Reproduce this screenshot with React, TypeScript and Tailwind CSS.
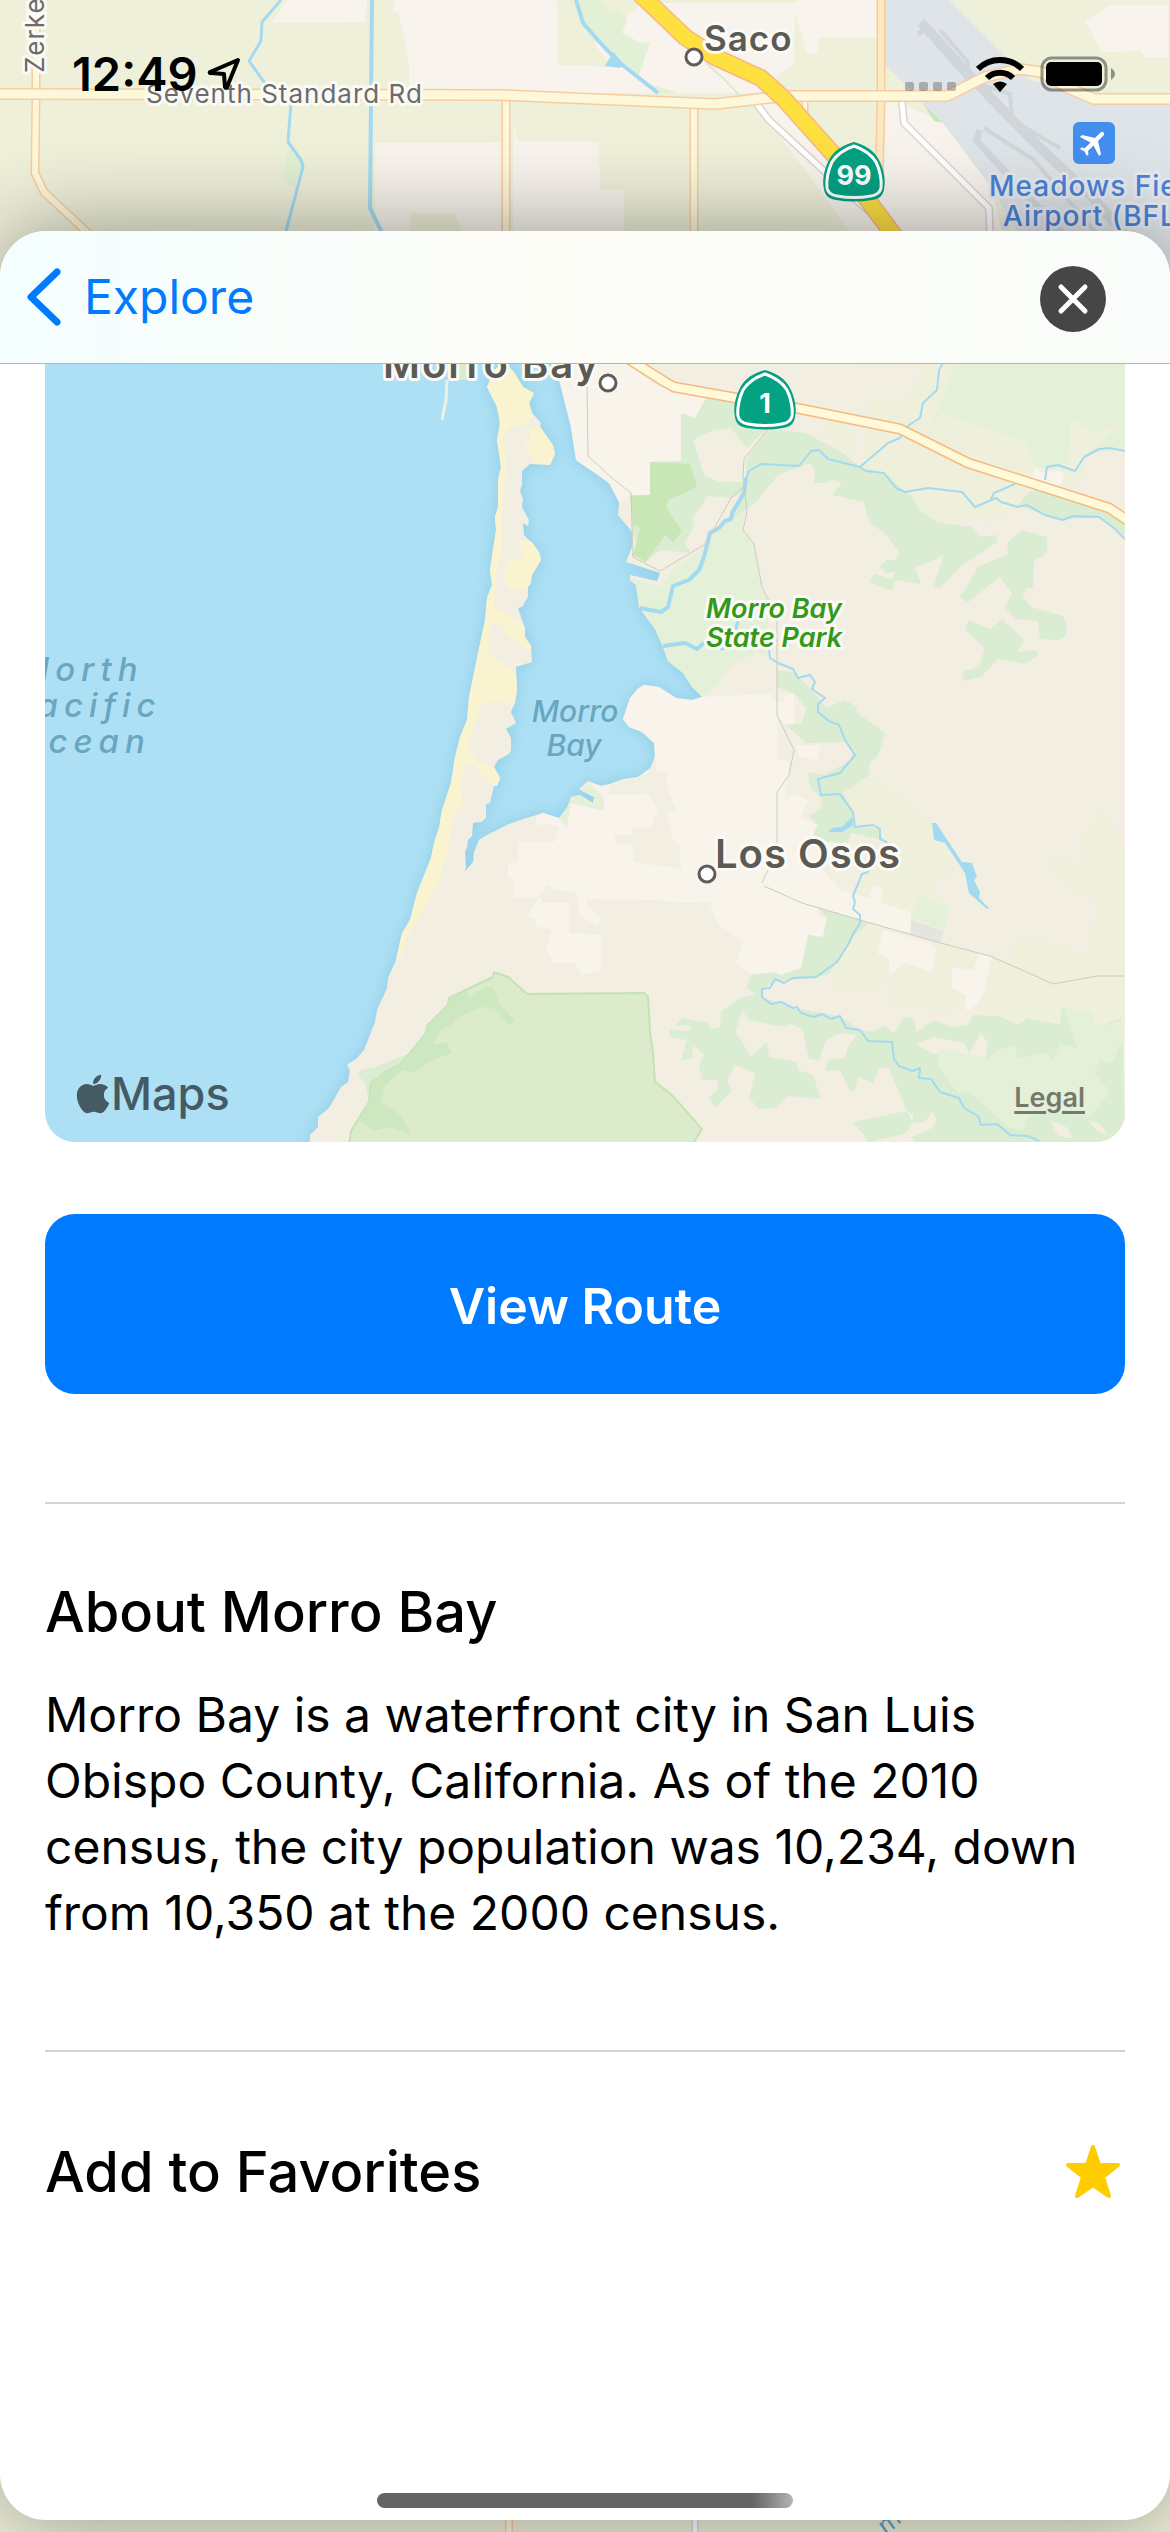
import React from 'react';
import { FaApple } from 'react-icons/fa';
import { MdFlight } from 'react-icons/md';

const HALO = {
  stroke: '#fbfaf5',
  strokeWidth: 6,
  strokeLinejoin: 'round',
  paintOrder: 'stroke',
} as const;

const Road: React.FC<{ points: string; width?: number; fill?: string; edge?: string }> = ({
  points,
  width = 7,
  fill = '#fdf8da',
  edge = '#f7cda0',
}) => (
  <g fill="none" strokeLinejoin="round">
    <polyline points={points} stroke={edge} strokeWidth={width + 3} />
    <polyline points={points} stroke={fill} strokeWidth={width} />
  </g>
);

const River: React.FC<{ points: string; width?: number }> = ({ points, width = 2 }) => (
  <polyline points={points} fill="none" stroke="#a3daf1" strokeWidth={width} strokeLinejoin="round" />
);

const Shield: React.FC<{ x: number; y: number; label: string }> = ({ x, y, label }) => (
  <g transform={`translate(${x} ${y})`}>
    <path
      d="M0 -30C11 -27 20 -22 25 -12C30 -3 32 9 30 17C29 24 25 27 18 28C6 30 -6 30 -18 28C-25 27 -29 24 -30 17C-32 9 -30 -3 -25 -12C-20 -22 -11 -27 0 -30Z"
      fill="#04a183"
    />
    <path
      d="M0 -26C9 -23 17 -18 22 -10C26 -2 28 9 27 16C26 21 23 23 17 24C6 26 -6 26 -17 24C-23 23 -26 21 -27 16C-28 9 -26 -2 -22 -10C-17 -18 -9 -23 0 -26Z"
      fill="none"
      stroke="#fff"
      strokeWidth="3"
    />
    <text y="13" textAnchor="middle" fontSize="27" fontWeight="700" fill="#fff">
      {label}
    </text>
  </g>
);

const TownDot: React.FC<{ x: number; y: number }> = ({ x, y }) => (
  <circle cx={x} cy={y} r="8" fill="#fff" stroke="#5f5d59" strokeWidth="3" />
);

const BackgroundMap = () => (
  <svg
    className="absolute inset-x-0 top-0 h-75 w-full"
    viewBox="0 0 1170 300"
    preserveAspectRatio="xMinYMin slice"
    aria-hidden="true"
  >
    <rect width="1170" height="300" fill="#eef0da" />
    <g fill="#f8f3ec">
      <polygon points="287,0 272,23 365,22 367,0" />
      <polygon points="394,0 393,10 399,13 409,63 409,91 600,93 600,66 558,65 557,0" />
      <polygon points="375,143 501,142 501,231 375,231" />
      <polygon points="513,123 519,142 599,142 600,190 624,190 624,231 513,231" />
      <polygon points="570,66 612,67 595,45 640,5 664,3 792,3 800,0 878,0 878,38 819,38 817,53 807,54 795,13 794,65 777,75 773,93 570,93" />
      <polygon points="880,103 901,103 943,123 991,187 1002,231 880,231" />
      <polygon points="756,104 782,104 840,160 878,190 878,231 850,231" />
      <polygon points="1085,22 1110,5 1168,5 1168,57 1145,57 1140,51 1102,52" />
    </g>
    <g fill="#eef0da">
      <polygon points="410,213 455,213 462,231 410,231" />
      <polygon points="808,108 878,108 878,122 860,122 854,108 820,130" />
    </g>
    <g fill="#e2f0d5">
      <polygon points="578,0 600,0 608,13 620,10 627,20 622,33 639,42 650,43 637,80 677,93 660,93 620,60 585,27" />
      <polygon points="288,148 301,160 303,167 296,190 283,180" />
      <polygon points="922,102 943,123 934,121" fill="#c4e8b8" />
    </g>
    <polygon points="885,0 949,0 1006,57 1030,80 1062,87 1094,102 1170,102 1170,300 1060,300 991,187 943,123 922,102 909,88 885,65" fill="#dfe4e8" />
    <g fill="none" stroke="#d0d6da">
      <polyline points="921,22 960,66 1030,138 1090,195 1150,262" strokeWidth="10" />
      <polyline points="918,34 928,27 1005,110 1075,180 1130,240" strokeWidth="5" />
      <polyline points="940,30 968,62 966,80 1010,94 1012,120 1060,148" strokeWidth="4" />
      <polyline points="980,130 976,140 1068,240" strokeWidth="7" />
      <polyline points="984,128 1034,160 1110,250" strokeWidth="4" />
    </g>

    <River points="281,0 262,22 261,41 249,61 264,82 291,103 288,142 301,160 303,167 286,231" width={3} />
    <River points="372,0 371,100 370,208 383,235" width={4} />
    <River points="576,0 583,23 604,47 620,63 658,93" width={4} />
    <polygon points="613,52 623,63 620,68 605,66" fill="#a3daf1" />
    <polyline points="705,62 725,80 742,98" fill="none" stroke="#dcebcc" strokeWidth="2" />

    <Road points="756,103 769,120 823,170 895,235" width={5} fill="#fff" edge="#dbd7d0" />
    <Road points="902,102 904,123 989,208 990,235" width={5} fill="#fff" edge="#dbd7d0" />
    <Road points="36,-4 36,94 35,173 44,192 90,235" width={6} />
    <Road points="506,97 506,235" width={6} />
    <Road points="694,105 694,235" width={6} />
    <Road points="881,-4 881,97 879,190" width={6} fill="#fce9c0" />
    <Road points="805,97 805,125" width={4} />
    <Road points="0,94 500,95 570,98 715,104 742,101 784,96 947,96 985,77 1020,69 1041,72 1068,88 1094,99 1170,99" width={9} />
    <Road points="640,-6 685,37 715,57 761,78 784,99 834,155 905,250" width={15} fill="#ffe041" edge="#f5b885" />

    <Shield x={854} y={172} label="99" />
    <TownDot x={694} y={57} />
    <g {...HALO} fill="#6b6b6b" fontSize="26">
      <text transform="translate(44 73) rotate(-90)" letterSpacing="1">
        Zerker Rd
      </text>
      <text x="146" y="103" letterSpacing="1">
        Seventh Standard Rd
      </text>
      <text x="704" y="51" fontSize="35" fontWeight="600" letterSpacing="1" fill="#5c5a55">
        Saco
      </text>
      <g fill="#4b82d6" stroke="#e6ebf0" fontSize="28" fontWeight="500" letterSpacing="1">
        <text x="989" y="196">
          Meadows Field
        </text>
        <text x="1003" y="226">
          Airport (BFL)
        </text>
      </g>
    </g>
    <rect x="1073" y="122" width="42" height="42" rx="6" fill="#438ff0" />
    <g transform="translate(1094 143) rotate(45)">
      <MdFlight x="-17" y="-17" size={34} color="#fff" />
    </g>
  </svg>
);

const BottomMap = () => (
  <svg
    className="absolute inset-x-0 bottom-0 h-15 w-full"
    viewBox="0 0 1170 60"
    preserveAspectRatio="xMinYMax slice"
    aria-hidden="true"
  >
    <Road points="509,0 509,60" width={5} />
    <Road points="695,0 695,60" width={4} fill="#fff" edge="#d8d8dc" />
    <text transform="translate(887 64) rotate(-45)" fontSize="26" fontStyle="italic" fill="#5aa5cc">
      m
    </text>
  </svg>
);

const StatusBar = () => (
  <div className="relative flex items-start justify-between pt-12 pr-13.5 pl-18">
    <div className="flex items-center gap-2">
      <span className="text-[47px] leading-13 font-semibold text-black">12:49</span>
      <svg className="h-9 w-9" viewBox="0 0 36 36" aria-hidden="true">
        <path
          d="M32 4L4 16Q3 17 5 17L18 18L19 31Q20 33 21 31Z"
          fill="none"
          stroke="#000"
          strokeWidth="4"
          strokeLinejoin="round"
        />
      </svg>
    </div>
    <div className="flex items-start gap-4 pt-2">
      <div className="flex gap-1.25 pt-6.5 pr-1">
        {[0, 1, 2, 3].map((dot) => (
          <span key={dot} className="h-2.25 w-2.25 rounded-xs bg-black/25" />
        ))}
      </div>
      <svg className="h-9 w-12" viewBox="0 0 48 36" aria-label="Wi-Fi">
        <path d="M2 13C14 1 34 1 46 13" fill="none" stroke="#000" strokeWidth="6" />
        <path d="M11 22C18 15 30 15 37 22" fill="none" stroke="#000" strokeWidth="6" />
        <path d="M17 28Q24 23 31 28L24 36Z" fill="#000" />
      </svg>
      <svg className="h-9 w-19" viewBox="0 0 76 36" aria-label="Battery">
        <rect x="2" y="2" width="64" height="32" rx="10" fill="none" stroke="#000" strokeOpacity=".4" strokeWidth="3" />
        <rect x="6" y="6" width="56" height="24" rx="5" fill="#000" />
        <path d="M71 12Q79 18 71 24Z" fill="#000" fillOpacity=".4" />
      </svg>
    </div>
  </div>
);

const COAST =
  '551,363 555,370 560,383 571,427 576,460 580,463 595,473 609,483 619,502 618,515 632,532 632,547 626,562 660,573 657,581 630,575 630,580 636,585 639,607 646,617 655,629 663,647 668,661 683,673 692,687 702,692 702,697 692,700 676,698 659,687 644,685 638,688 630,698 623,719 629,727 642,732 654,743 655,755 653,766 648,773 638,777 623,779 610,784 601,786 588,781 579,789 594,797 593,803 580,795 571,797 567,808 559,818 543,813 523,819 509,824 485,836 479,840 474,852 473,862 465,871 466,867 465,851 467,848 468,840 472,836 473,823 481,822 486,818 486,804 490,803 494,786 497,786 500,778 494,767 498,760 509,754 511,750 511,738 506,729 516,723 511,712 515,703 517,690 516,667 532,662 531,646 525,637 525,628 518,608 522,607 528,597 528,587 531,583 532,575 541,560 539,552 531,542 524,535 523,523 528,526 529,520 522,507 523,499 520,491 522,485 522,471 530,464 550,465 555,454 553,445 540,427 541,423 532,413 529,403 534,393 523,387 514,372 505,363 494,370 487,387 497,407 500,423 497,440 501,467 498,480 498,507 495,517 496,530 490,570 492,585 487,598 485,620 475,668 469,697 467,720 460,737 455,757 451,783 442,810 439,828 434,843 431,858 417,893 410,920 402,933 396,960 388,978 387,988 377,1010 375,1022 364,1050 357,1058 347,1065 350,1070 348,1082 341,1087 329,1108 318,1117 318,1127 310,1135 309,1150 1140,1150 1140,350 551,350';

const PreviewMap = () => (
  <svg className="block h-auto w-full" viewBox="45 364 1080 778" role="img" aria-label="Map of Morro Bay">
    <rect x="45" y="350" width="1080" height="800" fill="#ade0f5" />
    <polyline points="447,380 446,400 442,420" fill="none" stroke="#eef0e6" strokeWidth="3" />
    <polygon points="457,363 470,363 466,380 457,380" fill="#dcebcc" />
    <polygon points={COAST} fill="#f2eee1" className="drop-shadow-[0_0_8px_#8fcde6]" />

    {/* beach */}
    <g fill="#faf3cf">
      <polygon points="505,363 494,370 487,387 497,407 500,423 497,440 501,467 498,480 498,507 495,517 496,530 490,570 492,585 487,598 485,620 475,668 469,697 467,720 460,737 455,757 451,783 442,810 439,828 434,843 431,858 417,893 410,920 402,933 396,960 401,958 407,937 417,922 433,892 439,885 441,873 447,853 452,823 457,811 464,802 460,788 464,766 472,763 494,786 497,786 500,778 494,767 480,762 469,752 469,745 481,704 503,701 511,707 515,703 517,690 516,673 488,653 489,633 492,624 501,625 507,635 531,652 531,646 525,637 525,628 520,622 494,607 497,567 503,547 501,517 504,483 507,467 503,437 510,428 528,424 533,415 532,413 529,403 534,393 523,387 514,372" />
      <polygon points="539,425 529,430 531,438 525,444 534,463 550,465 555,454 553,445 541,428" />
      <polygon points="519,539 531,541 539,552 541,560 532,575 530,584 523,590 509,589 504,580 505,567 510,560 523,558" />
    </g>

    {/* towns */}
    <g fill="#f8f4ec">
      <polygon points="551,363 560,383 571,427 576,460 595,473 609,483 619,502 631,495 650,495 650,462 681,461 681,413 695,418 706,398 657,386 625,363" />
      <polygon points="702,697 770,694 777,702 784,703 785,695 794,695 794,724 786,724 777,717 777,760 789,761 789,775 785,790 785,800 794,794 808,800 800,817 817,825 813,835 851,843 843,857 821,867 840,890 868,898 873,885 884,888 880,903 911,912 910,933 860,920 818,908 818,918 827,918 823,937 808,935 801,968 781,975 749,973 736,963 744,941 719,925 709,902 687,903 655,900 586,899 588,907 601,917 597,926 580,915 576,892 555,890 547,885 538,897 513,898 514,882 508,875 508,863 518,863 518,842 554,842 559,827 543,823 537,827 536,816 543,813 559,818 571,803 587,806 604,811 604,798 589,782 601,786 610,784 638,777 653,766 655,755 654,743 642,732 629,727 623,719 630,698 644,685 659,687 676,698 692,700" />
      <polygon points="539,898 544,903 569,903 569,933 601,935 601,971 582,975 575,963 553,963 546,948 552,930 534,926 537,919 527,917" />
      <polygon points="796,745 821,745 817,760 800,757" />
      <polygon points="1036,468 1043,473 1065,470 1067,475 1055,492 1031,480" />
      <polygon points="883,930 930,943 936,950 932,972 905,963 889,975 889,960 877,953" />
      <polygon points="973,970 979,953 992,957 984,993 970,1012 964,1008 966,995 952,988 952,967" />
    </g>
    <polygon points="608,795 648,794 658,809 651,827 633,828 633,835 615,834 615,844 633,845 633,862 682,869 679,858 681,848 672,837 667,813 676,809 667,788 667,773 657,772 655,757 648,773 638,777 610,785" fill="#f2eee1" />

    {/* fields */}
    <g fill="#eff0db">
      <polygon points="870,398 907,400 924,363 956,363 928,433 941,413 1025,442 1036,468 1031,473 1018,503 1009,510 994,523 950,518 937,522 919,510 913,497 905,492 884,473 860,467" />
      <polygon points="822,427 843,415 855,438 852,458 830,440" />
      <polygon points="843,793 873,775 885,787 900,795 932,822 936,840 951,858 956,876 936,877 932,900 919,895 911,912 880,903 884,888 873,885 869,898 853,893 862,874 896,857 880,829 855,827" />
      <polygon points="869,923 883,930 877,953 889,960 889,975 881,990 831,987 837,962 856,930" />
      <polygon points="905,963 932,972 936,950 930,943 939,942 979,953 973,970 952,967 952,988 966,995 964,1008 934,1014 922,1007 884,1003 892,992 891,977" />
      <polygon points="992,957 1011,963 1014,937 1028,941 1041,936 1060,948 1088,952 1097,902 1069,887 1048,863 1050,855 1078,863 1093,858 1077,847 1101,808 1118,833 1125,853 1125,1018 1114,1037 1095,1028 1018,1025 973,1015 984,993" />
    </g>
    <g fill="#e4f1d8">
      <polygon points="956,363 1125,363 1125,450 1092,453 1065,473 1047,467 1036,468 1025,442 941,413 928,433" />
      <polygon points="715,527 731,520 746,507 742,530 754,544 762,587 768,600 768,657 757,652 732,665 712,690 702,697 692,687 683,673 668,661 663,647 655,629 639,607 636,585 630,578 661,587 674,568 706,547" />
      <polygon points="919,895 950,907 944,930 911,918" />
      <polygon points="567,808 571,797 580,795 593,803 594,797 580,790 590,785 604,798 604,811 571,803 567,828 559,818" />
    </g>
    <g fill="#eff0db">
      <polygon points="1071,419 1094,433 1121,423 1084,457 1084,480 1060,490 1070,450" />
    </g>

    {/* woods */}
    <g fill="#daecd1">
      <polygon points="681,413 695,418 706,398 736,403 768,428 747,448 731,428 714,430 693,440 700,462 704,475 719,482 742,482 746,493 731,498 708,496 693,517 693,528 685,543 691,553 661,550 644,562 632,532 631,495 650,495 650,462 681,461" />
      <polygon points="768,428 806,433 843,453 860,467 885,473 905,492 913,497 919,510 937,522 971,527 981,537 997,535 997,542 960,567 939,589 934,585 944,555 915,568 921,584 896,580 892,591 869,582 875,574 892,579 896,572 887,573 880,567 886,560 896,560 899,552 887,535 869,522 864,502 832,495 842,483 832,480 825,483 814,483 815,470 810,463 778,475 755,503 731,520 746,483 746,460" />
      <polygon points="1018,505 1028,493 1043,487 1125,513 1125,535 1099,517 1063,520 1043,515" />
      <polygon points="1022,530 1047,537 1047,553 1034,561 1033,588 1027,588 1022,595 1031,607 1063,616 1067,627 1065,637 1058,640 1040,639 1038,621 1016,619 1005,608 1012,593 1000,577 968,602 960,598 978,567 1008,554 1007,543" />
      <polygon points="969,620 990,629 1002,619 1024,640 1017,652 1035,650 1038,655 1024,664 998,659 981,677 962,681 964,671 979,667 985,648 965,630" />
      <polygon points="777,670 793,672 812,690 826,708 845,700 857,707 856,712 885,733 880,750 877,757 870,762 869,775 843,793 853,812 855,827 880,829 883,840 851,833 848,843 826,842 813,835 818,825 809,815 821,809 821,798 810,787 808,772 825,775 851,760 853,750 845,742 806,743 786,725 802,723 806,708 794,693 777,687" />
      <polygon points="751,975 774,972 781,975 801,968 808,935 823,937 827,918 818,908 869,923 853,937 830,973 816,978 775,981 762,990 762,997 791,1008 840,1016 860,1030 872,1032 884,1026 894,1033 904,1017 913,1018 917,1032 934,1020 951,1027 968,1025 973,1015 998,1016 1018,1025 1028,1018 1060,1025 1062,1007 1092,1013 1095,1028 1122,1018 1125,1142 915,1142 911,1137 932,1128 937,1120 933,1112 924,1122 913,1123 913,1115 907,1111 889,1068 879,1067 873,1083 858,1077 855,1091 850,1091 840,1070 825,1071 828,1060 845,1058 848,1047 857,1035 840,1033 826,1040 819,1060 809,1059 803,1030 789,1023 787,1028 749,1020 742,1010 735,1033 744,1042 751,1057 767,1042 769,1057 797,1062 798,1070 813,1075 821,1099 787,1096 776,1108 759,1109 749,1098 755,1073 735,1065 727,1080 732,1091 715,1108 709,1097 718,1090 717,1080 702,1080 699,1067 704,1054 692,1045 693,1058 681,1061 687,1040 670,1037 670,1030 691,1031 690,1026 675,1025 683,1018 708,1023 710,1029 720,1027 721,1012 740,998 755,995 747,987" />
      <polygon points="853,1122 907,1111 913,1123 905,1134 869,1142 862,1133" />
    </g>
    <g fill="#f2eee1">
      <polygon points="916,1044 934,1037 964,1043 969,1053 981,1033 988,1043 986,1058 960,1053 932,1054" />
      <polygon points="736,1032 744,1018 760,1028 787,1025 800,1050 797,1058 767,1042 751,1057" />
      <polygon points="1050,1120 1068,1128 1073,1139 1058,1136" />
      <polygon points="1088,1120 1100,1124 1108,1136 1096,1130" />
    </g>
    <g fill="#e4f1d8">
      <polygon points="941,1048 988,1059 996,1050 1015,1046 1018,1058 1048,1053 1052,1063 1060,1043 1077,1048 1063,1007 1092,1013 1096,1028 1122,1020 1122,1042 1112,1063 1099,1060 1095,1073 1110,1092 1090,1117 1050,1110 1028,1117 1024,1130 1009,1128 968,1090 958,1093 937,1065" />
    </g>
    <g fill="#c8e6b6">
      <polygon points="650,462 690,464 697,487 668,500 666,508 682,531 673,542 665,535 646,562 633,555 640,528 633,525 630,496 650,495" />
    </g>
    <polygon points="911,920 944,931 940,943 911,934" fill="#e5e5df" />

    {/* state park south of the bay */}
    <polygon points="365,1083 358,1075 362,1069 373,1068 410,1053 400,1065 371,1083 369,1102" fill="#daecd1" />
    <polygon
      points="349,1145 351,1131 369,1102 371,1083 387,1071 400,1065 410,1053 426,1033 427,1026 448,1005 449,998 493,977 494,972 508,977 527,994 644,993 648,997 650,1032 653,1053 655,1082 672,1095 702,1129 692,1145"
      fill="#dcebcc"
      stroke="#c3e3b3"
      strokeWidth="2"
    />
    <polygon points="449,998 467,990 470,998 484,987 493,987 499,1003 514,1020 510,1026 495,1009 482,1007 459,1017 451,1025 440,1031 434,1044 447,1043 452,1053 426,1063 421,1069 411,1073 403,1070 385,1085 381,1102 398,1113 410,1130 409,1134 389,1127 373,1131 359,1120 369,1102 371,1083 387,1071 400,1065 410,1053 426,1033 427,1026 448,1005" fill="#cde8c0" />

    {/* rivers and lakes */}
    <River points="943,363 939,370 937,390 923,403 920,418 909,425 900,438 888,443 860,467" />
    <River points="1125,539 1114,528 1099,517 1073,516 1063,520 1045,515 1027,505 1018,507 1001,502 996,498 975,507 962,492 928,488 905,492 896,488 884,473 866,471 860,467 828,459 819,450 811,451 799,466 761,464 749,471 746,478 744,493 732,513 731,519 725,521 719,528 710,533" />
    <River points="746,478 744,493 732,513 731,519 725,521 719,528 710,533 704,557 699,570 689,580 673,586 668,607 661,612 640,608" width={4} />
    <River points="1125,451 1110,448 1099,449 1084,457 1075,471 1058,465 1047,467 1045,480" />
    <River points="1015,484 994,493 991,499" />
    <River points="663,646 685,643 697,649 704,643" width={4} />
    <River points="738,621 734,635 726,648 720,649" width={3} />
    <River points="769,650 770,658 778,663 793,669 798,678 810,675 815,682 812,689 825,698 818,704 818,712 829,721 839,725 845,740 855,755 840,773 818,779 821,795 840,794 853,812 855,827 873,825 880,829 880,839 887,842" />
    <River points="887,842 868,872 862,874 853,896 855,902 853,909 860,915 860,923 853,934 849,943 837,962 816,977 793,978 784,983 775,979 770,988 762,989 762,997 771,1004 781,1002 793,1008 797,1007 801,1013 814,1017 822,1014 831,1019 840,1016 846,1028 860,1030 868,1041 892,1042 894,1059 899,1066 913,1071 920,1068 919,1078 931,1079 940,1092 959,1098 964,1108 978,1116 981,1125 997,1124 1010,1135 1028,1136 1039,1141" />
    <g fill="#a3daf1">
      <polygon points="932,823 936,823 952,847 962,862 972,863 977,877 974,880 980,892 979,898 989,908 987,909 969,893 965,873 945,843 934,840" />
      <polygon points="828,832 832,828 842,827 852,817 853,825 842,832" />
    </g>

    {/* minor roads */}
    <g fill="none" stroke="#cdcac1" strokeWidth="1">
      <polyline points="587,383 588,456 612,478 631,493 633,557 660,571 704,545 715,527 731,498 743,487" />
      <polyline points="768,429 744,459 743,478 747,512 743,530 754,544 762,587 777,617 777,715 794,750 789,775 777,792 777,850 762,883" />
      <polyline points="764,886 802,903 860,920 937,942 990,956 1031,974 1053,984 1097,976 1125,976" />
    </g>
    <Road points="627,358 665,382 674,387 736,398 796,408 900,429 968,463 1109,508 1130,522" width={8} fill="#fdf9d9" edge="#f5ba80" />

    <Shield x={765} y={400} label="1" />
    <TownDot x={608} y={383} />
    <TownDot x={707} y={874} />

    <g {...HALO} fill="#5c5a55" fontSize="40" fontWeight="600">
      <text x="383" y="378" letterSpacing="2">
        Morro Bay
      </text>
      <text x="715" y="868" letterSpacing="1">
        Los Osos
      </text>
      <g fontSize="27" fontStyle="italic" fill="#33991b">
        <text x="774" y="618" textAnchor="middle">
          Morro Bay
        </text>
        <text x="774" y="647" textAnchor="middle">
          State Park
        </text>
      </g>
    </g>
    <g fill="#6aa6bf" fontStyle="italic" fontWeight="500" textAnchor="middle">
      <g fontSize="30">
        <text x="575" y="722">
          Morro
        </text>
        <text x="574" y="756">
          Bay
        </text>
      </g>
      <g fontSize="33" letterSpacing="6">
        <text x="84" y="681">
          North
        </text>
        <text x="86" y="717">
          Pacific
        </text>
        <text x="84" y="753">
          Ocean
        </text>
      </g>
    </g>
  </svg>
);

const NavBar = () => (
  <header className="flex h-33.25 items-center justify-between border-b border-[#b4b6b5] bg-linear-to-r from-[#f4fefe] via-[#fdfcf7] to-[#f9fcfa] pr-16 pl-6">
    <button className="flex items-center gap-5 text-5xl text-[#007aff]">
      <svg className="h-15 w-10" viewBox="0 0 40 60" aria-hidden="true">
        <path
          d="M33 5L7 30L33 55"
          fill="none"
          stroke="currentColor"
          strokeWidth="7"
          strokeLinecap="round"
          strokeLinejoin="round"
        />
      </svg>
      Explore
    </button>
    <button aria-label="Close" className="mt-1 flex h-16.5 w-16.5 items-center justify-center rounded-full bg-[#464646]">
      <svg className="h-8 w-8" viewBox="0 0 32 32" aria-hidden="true">
        <path d="M4 4L28 28M28 4L4 28" stroke="#fff" strokeWidth="5" strokeLinecap="round" />
      </svg>
    </button>
  </header>
);

const PlaceDetails = () => (
  <main className="flex flex-1 flex-col px-11.25">
    <div className="relative overflow-hidden rounded-b-[30px]">
      <PreviewMap />
      <div className="absolute bottom-5 left-7.5 flex items-center text-[45px] leading-14 font-medium text-[#465a63]">
        <FaApple className="h-11 w-9" aria-hidden="true" />
        Maps
      </div>
      <a
        href="#legal"
        className="absolute right-10 bottom-7 text-[27px] leading-8 font-semibold text-[#75796b] underline decoration-3 underline-offset-4"
      >
        Legal
      </a>
    </div>

    <button className="mt-18 h-45 rounded-[30px] bg-[#007aff] pt-1 text-[50px] font-semibold text-white">
      View Route
    </button>

    <section className="mt-27 border-t-2 border-[#d3d3d6] pt-18">
      <h2 className="text-[56px] leading-18 font-medium">About Morro Bay</h2>
      <p className="mt-8.5 text-5xl leading-16.5">
        Morro Bay is a waterfront city in San Luis Obispo County, California. As of the 2010 census, the city
        population was 10,234, down from 10,350 at the 2000 census.
      </p>
    </section>

    <section className="mt-26 flex items-center justify-between border-t-2 border-[#d3d3d6] pt-21">
      <h2 className="text-[56px] leading-18 font-medium">Add to Favorites</h2>
      <button aria-label="Remove from favorites" className="mr-0.5">
        <svg className="h-15 w-15" viewBox="0 0 60 60" aria-hidden="true">
          <path
            d="M30 5L36 23L55 23L40 35L46 54L30 43L14 54L20 35L5 23L24 23Z"
            fill="#ffcc00"
            stroke="#ffcc00"
            strokeWidth="4"
            strokeLinejoin="round"
          />
        </svg>
      </button>
    </section>
  </main>
);

export default function App() {
  return (
    <div className="relative flex min-h-screen flex-col overflow-hidden bg-[#eef0da] pb-3 font-['Inter','Liberation_Sans',sans-serif] text-black">
      <BackgroundMap />
      <BottomMap />
      <div className="relative h-57.75">
        <StatusBar />
      </div>
      <div className="relative flex flex-1 flex-col overflow-hidden rounded-[46px] bg-white shadow-[0_0_90px_rgba(0,0,0,0.4)]">
        <NavBar />
        <PlaceDetails />
        <div className="mx-auto mb-3 h-3.75 w-104 rounded-full bg-linear-to-r from-[#636363] from-90% to-[#b4b4b4]" />
      </div>
    </div>
  );
}
